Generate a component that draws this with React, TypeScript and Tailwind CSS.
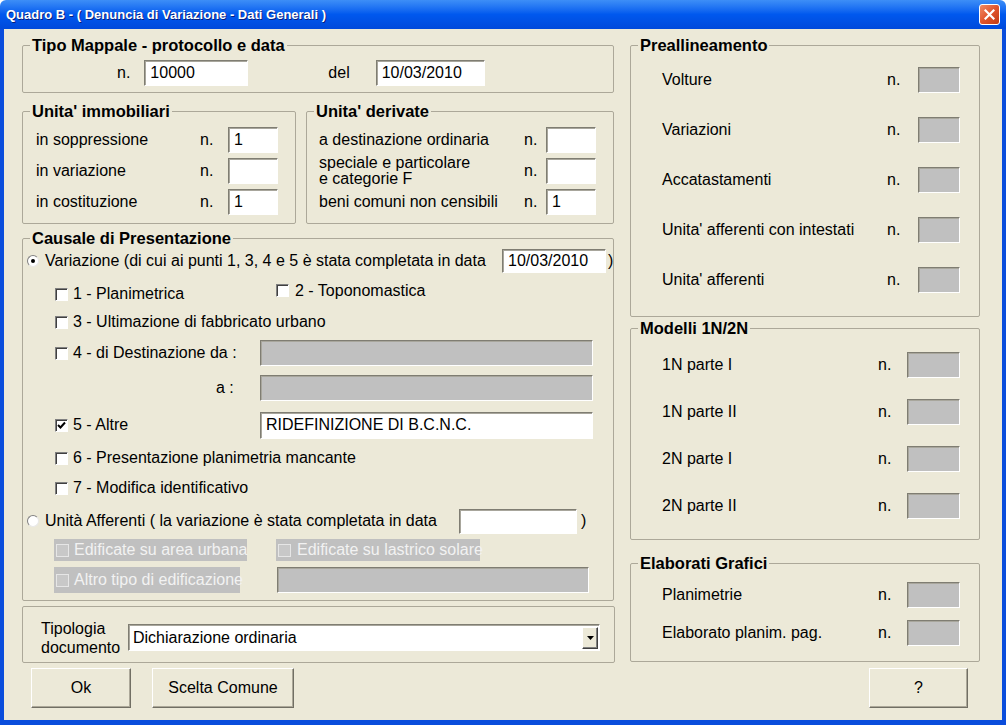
import React from "react";

type Kids = { children?: React.ReactNode };

const GroupBox = ({ title, className = "", children }: Kids & { title: string; className?: string }) => (
  <fieldset className={`border border-[#aca899] rounded-[2px] ${className}`}>
    <legend className="ml-[7px] px-[2px] font-bold text-[16.5px] leading-[18px]">{title}</legend>
    {children}
  </fieldset>
);

const Field = ({ value = "", gray = false, className = "" }: { value?: string; gray?: boolean; className?: string }) => (
  <div
    className={`flex items-center border border-t-[#7f7d72] border-l-[#7f7d72] border-r-white border-b-white shadow-[inset_1px_1px_0_#a8a69c] ${
      gray ? "bg-[#c0c0c0]" : "bg-white"
    } ${className}`}
  >
    <span className="pl-[5px] leading-none whitespace-nowrap">{value}</span>
  </div>
);

const Check = ({ checked = false, disabled = false }: { checked?: boolean; disabled?: boolean }) => (
  <span
    className={`w-[13px] h-[13px] shrink-0 flex items-center justify-center border ${
      disabled
        ? "border-[#e6e6e6] bg-[#c8c8c8]"
        : "border-t-[#808080] border-l-[#808080] border-r-white border-b-white bg-white shadow-[inset_1px_1px_0_#404040]"
    }`}
  >
    {checked && (
      <svg width="9" height="9" viewBox="0 0 9 9">
        <path d="M1 4 L3.5 6.5 L8 1.5" stroke="#000" strokeWidth="2" fill="none" />
      </svg>
    )}
  </span>
);

const Radio = ({ on = false }: { on?: boolean }) => (
  <span className="w-[12px] h-[12px] shrink-0 rounded-full bg-white border border-t-[#808080] border-l-[#808080] border-r-[#e8e8e8] border-b-[#e8e8e8] flex items-center justify-center">
    {on && <span className="w-[4px] h-[4px] rounded-full bg-black" />}
  </span>
);

const Button = ({ children, className = "" }: Kids & { className?: string }) => (
  <button
    className={`h-[40px] bg-[#ece9d8] border border-t-white border-l-white border-r-[#716f64] border-b-[#716f64] shadow-[inset_-1px_-1px_0_#aca899] text-[16px] leading-none ${className}`}
  >
    {children}
  </button>
);

const CountRow = ({ label, h, labelW, nW, inputW }: { label: string; h: string; labelW: string; nW: string; inputW: string }) => (
  <div className={`flex items-center pl-[31px] ${h}`}>
    <span className={labelW}>{label}</span>
    <span className={nW}>n.</span>
    <Field gray className={`h-[26px] ${inputW}`} />
  </div>
);

export default function App() {
  return (
    <div className="w-[1006px] h-[725px] flex flex-col overflow-hidden font-['Liberation_Sans',Arial,sans-serif] text-[16px] text-black">
      {/* title bar */}
      <div className="h-[29px] shrink-0 flex items-center justify-between pl-[6px] pr-[6px] rounded-t-[6px] bg-gradient-to-b from-[#3d8ef7] via-[#0058ee] to-[#0049db]">
        <span className="text-white font-bold text-[13px] [text-shadow:1px_1px_0_#0a1e7a]">
          Quadro B - ( Denuncia di Variazione - Dati Generali )
        </span>
        <span className="w-[21px] h-[21px] rounded-[3px] border border-white bg-gradient-to-br from-[#f08a64] via-[#e0542c] to-[#c23a12] flex items-center justify-center">
          <svg width="11" height="11" viewBox="0 0 11 11">
            <path d="M1.5 1.5 L9.5 9.5 M9.5 1.5 L1.5 9.5" stroke="#fff" strokeWidth="2.2" strokeLinecap="square" />
          </svg>
        </span>
      </div>

      {/* body */}
      <div className="flex-1 flex bg-[#ece9d8] border-l-4 border-r-4 border-b-[5px] border-[#0a4ddc]">
        <div className="flex gap-[15px] pl-[18px] pt-[7px]">
          {/* left column */}
          <div className="w-[593px] flex flex-col">
            <GroupBox title="Tipo Mappale - protocollo e data" className="w-[592px] h-[57px]">
              <div className="flex items-center h-[26px] mt-[6px]">
                <span className="ml-[94px]">n.</span>
                <Field value="10000" className="ml-[14px] w-[104px] h-[26px]" />
                <span className="ml-[80px]">del</span>
                <Field value="10/03/2010" className="ml-[26px] w-[109px] h-[26px]" />
              </div>
            </GroupBox>

            <div className="flex gap-[10px] mt-[9px]">
              <GroupBox title="Unita' immobiliari" className="w-[274px] h-[122px]">
                <div className="flex flex-col gap-[5px] pt-[7px] pl-[13px]">
                  {[
                    ["in soppressione", "1"],
                    ["in variazione", ""],
                    ["in costituzione", "1"],
                  ].map(([l, v]) => (
                    <div key={l} className="flex items-center h-[26px]">
                      <span className="w-[164px]">{l}</span>
                      <span className="w-[28px]">n.</span>
                      <Field value={v} className="w-[50px] h-[26px]" />
                    </div>
                  ))}
                </div>
              </GroupBox>

              <GroupBox title="Unita' derivate" className="w-[308px] h-[122px]">
                <div className="flex flex-col gap-[5px] pt-[7px] pl-[12px]">
                  <div className="flex items-center h-[26px]">
                    <span className="w-[205px]">a destinazione ordinaria</span>
                    <span className="w-[22px]">n.</span>
                    <Field className="w-[50px] h-[26px]" />
                  </div>
                  <div className="flex items-center h-[26px]">
                    <span className="w-[205px] leading-[16px]">
                      speciale e particolare
                      <br />e categorie F
                    </span>
                    <span className="w-[22px]">n.</span>
                    <Field className="w-[50px] h-[26px]" />
                  </div>
                  <div className="flex items-center h-[26px]">
                    <span className="w-[205px]">beni comuni non censibili</span>
                    <span className="w-[22px]">n.</span>
                    <Field value="1" className="w-[50px] h-[26px]" />
                  </div>
                </div>
              </GroupBox>
            </div>

            <GroupBox title="Causale di Presentazione" className="w-[592px] h-[372px] mt-[5px]">
              <div className="flex flex-col">
                <div className="flex items-center h-[28px] pl-[4px]">
                  <Radio on />
                  <span className="ml-[6px] w-[457px] whitespace-nowrap">
                    Variazione (di cui ai punti 1, 3, 4 e 5 è stata completata in data
                  </span>
                  <Field value="10/03/2010" className="w-[104px] h-[24px]" />
                  <span className="ml-[2px]">)</span>
                </div>

                <div className="flex items-center h-[35px] pl-[32px]">
                  <div className="flex items-center w-[221px] mt-[3px]">
                    <Check />
                    <span className="ml-[5px]">1 - Planimetrica</span>
                  </div>
                  <div className="flex items-center -mt-[4px]">
                    <Check />
                    <span className="ml-[6px]">2 - Toponomastica</span>
                  </div>
                </div>

                <div className="flex items-center h-[24px] pl-[32px]">
                  <Check />
                  <span className="ml-[5px]">3 - Ultimazione di fabbricato urbano</span>
                </div>

                <div className="flex items-center h-[38px] pl-[32px]">
                  <div className="flex items-center w-[205px]">
                    <Check />
                    <span className="ml-[5px]">4 - di Destinazione da :</span>
                  </div>
                  <Field gray className="w-[333px] h-[26px]" />
                </div>

                <div className="flex items-center h-[32px] pl-[193px]">
                  <span className="w-[44px]">a :</span>
                  <Field gray className="w-[333px] h-[26px]" />
                </div>

                <div className="flex items-center h-[42px] pl-[32px]">
                  <div className="flex items-center w-[205px]">
                    <Check checked />
                    <span className="ml-[5px]">5 - Altre</span>
                  </div>
                  <Field value="RIDEFINIZIONE DI B.C.N.C." className="w-[333px] h-[27px] items-start pt-[4px]" />
                </div>

                <div className="flex items-center h-[24px] pl-[32px]">
                  <Check />
                  <span className="ml-[5px]">6 - Presentazione planimetria mancante</span>
                </div>

                <div className="flex items-center h-[36px] pl-[32px]">
                  <Check />
                  <span className="ml-[5px]">7 - Modifica identificativo</span>
                </div>

                <div className="flex items-center h-[30px] pl-[4px]">
                  <Radio />
                  <span className="ml-[6px] w-[414px] whitespace-nowrap">
                    Unità Afferenti ( la variazione è stata completata in data
                  </span>
                  <Field className="w-[118px] h-[25px]" />
                  <span className="ml-[4px]">)</span>
                </div>

                <div className="flex items-center h-[28px] pl-[31px]">
                  <div className="flex items-center w-[193px] h-[22px] bg-[#c0c0c0] pl-[2px] whitespace-nowrap">
                    <Check disabled />
                    <span className="ml-[5px] text-[#f2f2f2]">Edificate su area urbana</span>
                  </div>
                  <div className="flex items-center w-[204px] h-[22px] bg-[#c0c0c0] ml-[29px] pl-[2px] whitespace-nowrap">
                    <Check disabled />
                    <span className="ml-[6px] text-[#f2f2f2]">Edificate su lastrico solare</span>
                  </div>
                </div>

                <div className="flex items-center h-[32px] pl-[31px]">
                  <div className="flex items-center w-[186px] h-[26px] bg-[#c0c0c0] pl-[2px] whitespace-nowrap">
                    <Check disabled />
                    <span className="ml-[5px] text-[#f2f2f2]">Altro tipo di edificazione</span>
                  </div>
                  <Field gray className="w-[312px] h-[26px] ml-[37px]" />
                </div>
              </div>
            </GroupBox>

            <div className="w-[593px] h-[57px] mt-[5px] border border-[#aca899] rounded-[2px] flex items-center pt-[6px] pl-[18px]">
              <span className="w-[87px] leading-[19px]">
                Tipologia
                <br />
                documento
              </span>
              <div className="w-[472px] h-[27px] flex items-center justify-between bg-white border border-t-[#7f7d72] border-l-[#7f7d72] border-r-white border-b-white shadow-[inset_1px_1px_0_#a8a69c] pr-[1px]">
                <span className="pl-[4px]">Dichiarazione ordinaria</span>
                <span className="w-[16px] h-[22px] flex items-center justify-center bg-[#ece9d8] border border-t-white border-l-white border-r-[#404040] border-b-[#404040] shadow-[inset_-1px_-1px_0_#808080]">
                  <svg width="7" height="4" viewBox="0 0 7 4">
                    <path d="M0 0 H7 L3.5 4 Z" fill="#000" />
                  </svg>
                </span>
              </div>
            </div>

            <div className="flex mt-[5px]">
              <Button className="ml-[9px] w-[100px]">Ok</Button>
              <Button className="ml-[21px] w-[142px]">Scelta Comune</Button>
            </div>
          </div>

          {/* right column */}
          <div className="w-[350px] flex flex-col">
            <GroupBox title="Preallineamento" className="w-[350px] h-[281px]">
              <div className="flex flex-col pt-[1px]">
                {["Volture", "Variazioni", "Accatastamenti", "Unita' afferenti con intestati", "Unita' afferenti"].map((l) => (
                  <CountRow key={l} label={l} h="h-[50px]" labelW="w-[225px]" nW="w-[31px]" inputW="w-[42px]" />
                ))}
              </div>
            </GroupBox>

            <GroupBox title="Modelli 1N/2N" className="w-[350px] h-[221px] mt-[2px]">
              <div className="flex flex-col pt-[4px]">
                {["1N parte I", "1N parte II", "2N parte I", "2N parte II"].map((l) => (
                  <CountRow key={l} label={l} h="h-[47px]" labelW="w-[216px]" nW="w-[29px]" inputW="w-[53px]" />
                ))}
              </div>
            </GroupBox>

            <GroupBox title="Elaborati Grafici" className="w-[350px] h-[108px] mt-[14px]">
              <div className="flex flex-col pt-[4px]">
                {["Planimetrie", "Elaborato planim. pag."].map((l) => (
                  <CountRow key={l} label={l} h="h-[38px]" labelW="w-[216px]" nW="w-[29px]" inputW="w-[53px]" />
                ))}
              </div>
            </GroupBox>

            <div className="flex mt-[6px]">
              <Button className="ml-[239px] w-[99px]">?</Button>
            </div>
          </div>
        </div>
      </div>
    </div>
  );
}
